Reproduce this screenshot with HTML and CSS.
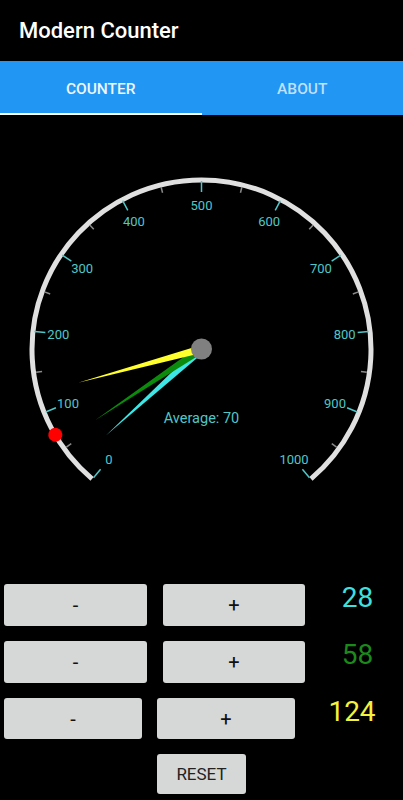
FILE: index.html
```html
<!DOCTYPE html>
<html lang="en">
<head>
  <meta charset="UTF-8" />
  <meta name="viewport" content="width=device-width, initial-scale=1" />
  <title>Modern Counter</title>
  <link rel="stylesheet" href="styles.css">
</head>
<body>
  <!-- App bar -->
  <header class="appbar">
    <h1 class="appbar-title">Modern Counter</h1>
  </header>

  <!-- Tabs -->
  <nav class="tabs">
    <div class="tab tab-active">COUNTER</div>
    <div class="tab">ABOUT</div>
  </nav>

  <!-- Gauge -->
  <div class="gauge">
    <svg class="gauge-svg" width="403" height="469" viewBox="0 115 403 469">
      <path class="gauge-arc" d="M 92.05 478.84 A 169.5 169.5 0 1 1 310.95 478.84" />

      <g class="ticks-minor">
        <line x1="0" y1="-167" x2="0" y2="-161" transform="translate(201.5 349) rotate(-126)" />
        <line x1="0" y1="-167" x2="0" y2="-161" transform="translate(201.5 349) rotate(-98)" />
        <line x1="0" y1="-167" x2="0" y2="-161" transform="translate(201.5 349) rotate(-70)" />
        <line x1="0" y1="-167" x2="0" y2="-161" transform="translate(201.5 349) rotate(-42)" />
        <line x1="0" y1="-167" x2="0" y2="-161" transform="translate(201.5 349) rotate(-14)" />
        <line x1="0" y1="-167" x2="0" y2="-161" transform="translate(201.5 349) rotate(14)" />
        <line x1="0" y1="-167" x2="0" y2="-161" transform="translate(201.5 349) rotate(42)" />
        <line x1="0" y1="-167" x2="0" y2="-161" transform="translate(201.5 349) rotate(70)" />
        <line x1="0" y1="-167" x2="0" y2="-161" transform="translate(201.5 349) rotate(98)" />
        <line x1="0" y1="-167" x2="0" y2="-161" transform="translate(201.5 349) rotate(126)" />
      </g>

      <g class="ticks-major">
        <line x1="0" y1="-168" x2="0" y2="-157" transform="translate(201.5 349) rotate(-140)" />
        <line x1="0" y1="-168" x2="0" y2="-157" transform="translate(201.5 349) rotate(-112)" />
        <line x1="0" y1="-168" x2="0" y2="-157" transform="translate(201.5 349) rotate(-84)" />
        <line x1="0" y1="-168" x2="0" y2="-157" transform="translate(201.5 349) rotate(-56)" />
        <line x1="0" y1="-168" x2="0" y2="-157" transform="translate(201.5 349) rotate(-28)" />
        <line x1="0" y1="-168" x2="0" y2="-157" transform="translate(201.5 349) rotate(0)" />
        <line x1="0" y1="-168" x2="0" y2="-157" transform="translate(201.5 349) rotate(28)" />
        <line x1="0" y1="-168" x2="0" y2="-157" transform="translate(201.5 349) rotate(56)" />
        <line x1="0" y1="-168" x2="0" y2="-157" transform="translate(201.5 349) rotate(84)" />
        <line x1="0" y1="-168" x2="0" y2="-157" transform="translate(201.5 349) rotate(112)" />
        <line x1="0" y1="-168" x2="0" y2="-157" transform="translate(201.5 349) rotate(140)" />
      </g>

      <!-- labels: rotate out to the radius, then rotate back so text stays upright -->
      <g class="gauge-labels">
        <text x="0" y="4.6" transform="translate(201.5 349) rotate(-140) translate(0 -144) rotate(140)">0</text>
        <text x="0" y="4.6" transform="translate(201.5 349) rotate(-112) translate(0 -144) rotate(112)">100</text>
        <text x="0" y="4.6" transform="translate(201.5 349) rotate(-84) translate(0 -144) rotate(84)">200</text>
        <text x="0" y="4.6" transform="translate(201.5 349) rotate(-56) translate(0 -144) rotate(56)">300</text>
        <text x="0" y="4.6" transform="translate(201.5 349) rotate(-28) translate(0 -144) rotate(28)">400</text>
        <text x="0" y="4.6" transform="translate(201.5 349) translate(0 -144)">500</text>
        <text x="0" y="4.6" transform="translate(201.5 349) rotate(28) translate(0 -144) rotate(-28)">600</text>
        <text x="0" y="4.6" transform="translate(201.5 349) rotate(56) translate(0 -144) rotate(-56)">700</text>
        <text x="0" y="4.6" transform="translate(201.5 349) rotate(84) translate(0 -144) rotate(-84)">800</text>
        <text x="0" y="4.6" transform="translate(201.5 349) rotate(112) translate(0 -144) rotate(-112)">900</text>
        <text x="0" y="4.6" transform="translate(201.5 349) rotate(140) translate(0 -144) rotate(-140)">1000</text>
      </g>

      <!-- average marker (70) -->
      <circle class="avg-dot" cx="0" cy="-169.5" r="7" transform="translate(201.5 349) rotate(-120.4)" />

      <text class="gauge-avg" x="201.5" y="423">Average: 70</text>

      <!-- needles: 28, 58, 124 -->
      <polygon class="needle needle-cyan" points="-4,0 4,0 0,-129" transform="translate(201.5 349) rotate(-132.16)" />
      <polygon class="needle needle-green" points="-4,0 4,0 0,-128" transform="translate(201.5 349) rotate(-123.76)" />
      <polygon class="needle needle-yellow" points="-4,0 4,0 0,-128" transform="translate(201.5 349) rotate(-105.28)" />

      <circle class="pivot" cx="201.5" cy="349" r="10.5" />
    </svg>
  </div>

  <!-- Counters -->
  <div class="controls">
    <div class="counter-row">
      <button class="btn btn-step">-</button>
      <button class="btn btn-step">+</button>
      <div class="count count-cyan">28</div>
    </div>
    <div class="counter-row">
      <button class="btn btn-step">-</button>
      <button class="btn btn-step">+</button>
      <div class="count count-green">58</div>
    </div>
    <div class="counter-row counter-row-narrow">
      <button class="btn btn-step">-</button>
      <button class="btn btn-step">+</button>
      <div class="count count-yellow">124</div>
    </div>
    <button class="btn btn-reset">RESET</button>
  </div>
</body>
</html>
```

FILE: styles.css
```css
/* Reset and base */
* {
  box-sizing: border-box;
}
html, body {
  margin: 0;
  padding: 0;
  background: #000;
  font-family: Roboto, "Noto Sans", sans-serif;
  overflow: hidden;
}

/* App bar */
.appbar {
  height: 61px;
  display: flex;
  align-items: center;
  padding-left: 19px;
}
.appbar-title {
  margin: 0;
  color: #fff;
  font-size: 22px;
  font-weight: 500;
}

/* Tabs */
.tabs {
  display: flex;
  height: 54px;
  background: #2196f3;
}
.tab {
  flex: 1;
  display: flex;
  justify-content: center;
  align-items: center;
  padding-top: 3px;
  font-size: 15.5px;
  font-weight: 500;
  color: rgba(255,255,255,0.72);
  border-bottom: 2px solid transparent;
}
.tab-active {
  color: #eef6fe;
  border-bottom-color: #fff;
}

/* Gauge */
.gauge-svg {
  display: block;
}
.gauge-arc {
  fill: none;
  stroke: #e0e0e0;
  stroke-width: 5;
}
.ticks-minor line {
  stroke: #8a8a8a;
  stroke-width: 1.5;
}
.ticks-major line {
  stroke: #4fc7c9;
  stroke-width: 1.5;
}
.gauge-labels text {
  fill: #4fc7c9;
  font-size: 13px;
  text-anchor: middle;
}
.gauge-avg {
  fill: #4fc7c9;
  font-size: 14.5px;
  text-anchor: middle;
}
.avg-dot {
  fill: #ff0000;
}
.needle-cyan {
  fill: #3ee6e6;
}
.needle-green {
  fill: #0b8a0b;
}
.needle-yellow {
  fill: #ffff2e;
}
.pivot {
  fill: #808080;
}

/* Counter rows */
.controls {
  display: flex;
  flex-direction: column;
  gap: 14px;
  padding-left: 4px;
}
.counter-row {
  display: flex;
  align-items: flex-start;
  gap: 16px;
}
.counter-row + .counter-row {
  margin-top: 1px;
}
.btn {
  border: none;
  border-radius: 3px;
  background: #d6d7d7;
  color: #111;
  font-family: Roboto, "Noto Sans", sans-serif;
  padding: 0;
}
.btn-step {
  width: 143px;
  height: 42px;
  font-size: 20px;
}
.counter-row .btn-step + .btn-step {
  width: 142px;
}
.counter-row-narrow {
  gap: 15px;
}
.counter-row-narrow .btn-step,
.counter-row-narrow .btn-step + .btn-step {
  width: 138px;
  height: 41px;
}
.count {
  flex: 1;
  text-align: center;
  padding-right: 9px;
  margin-top: -3px;
  font-size: 28px;
  line-height: 33px;
}
.count-cyan {
  color: #3fe0e0;
}
.count-green {
  color: #1b8a1b;
}
.count-yellow {
  color: #f2f23f;
}
.btn-reset {
  align-self: flex-start;
  margin-left: 153px;
  margin-top: 1px;
  width: 89px;
  height: 40px;
  font-size: 17px;
  color: #222;
}
```
